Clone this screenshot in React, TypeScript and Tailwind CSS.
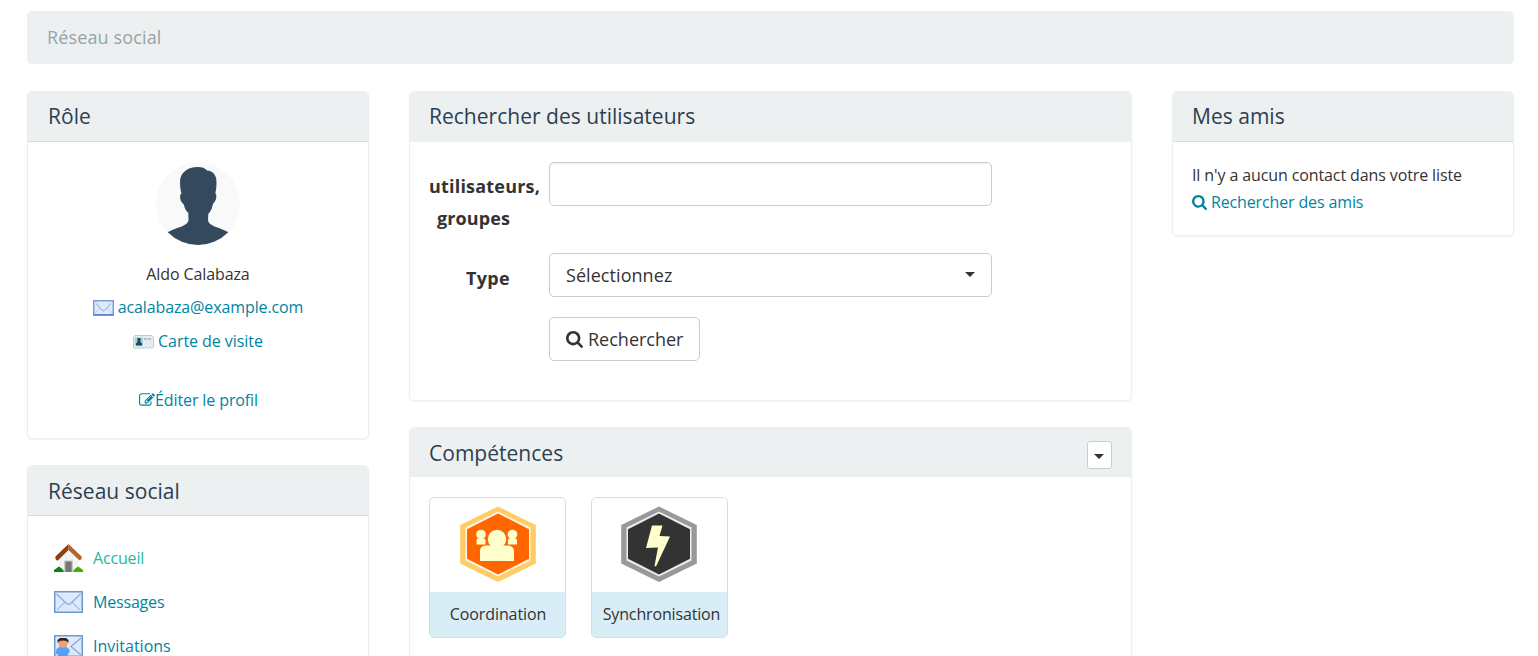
import { useId, type ReactNode } from "react";

const SEARCH_PATH =
  "M1152 832q0-185-131.5-316.5t-316.5-131.5-316.5 131.5-131.5 316.5 131.5 316.5 316.5 131.5 316.5-131.5 131.5-316.5zm512 832q0 52-38 90t-90 38q-54 0-90-38l-343-342q-179 124-399 124-143 0-273.5-55.5t-225-150-150-225-55.5-273.5 55.5-273.5 150-225 225-150 273.5-55.5 273.5 55.5 225 150 150 225 55.5 273.5q0 220-124 399l343 343q37 37 37 90z";
const EDIT_PATH =
  "M888 1184l116-116-152-152-116 116v56h96v96h56zm440-720q-16-16-33 1l-350 350q-17 17-1 33t33-1l350-350q17-17 1-33zm80 594v190q0 119-84.5 203.5t-203.5 84.5h-832q-119 0-203.5-84.5t-84.5-203.5v-832q0-119 84.5-203.5t203.5-84.5h832q63 0 117 25 15 7 18 23 3 17-9 29l-49 49q-14 14-32 8-23-6-45-6h-832q-66 0-113 47t-47 113v832q0 66 47 113t113 47h832q66 0 113-47t47-113v-126q0-13 9-22l64-64q15-15 35-7t20 29zm-96-738l288 288-672 672h-288v-288zm444 132l-92 92-288-288 92-92q28-28 68-28t68 28l152 152q28 28 28 68t-28 68z";

function SearchIcon({ className }: { className: string }) {
  return (
    <svg viewBox="0 128 1664 1664" className={className} fill="currentColor">
      <path d={SEARCH_PATH} />
    </svg>
  );
}

function EditIcon() {
  return (
    <svg viewBox="0 128 1792 1536" className="h-[14px] w-[16px]" fill="currentColor">
      <path d={EDIT_PATH} />
    </svg>
  );
}

function Avatar() {
  const id = useId();
  return (
    <svg viewBox="0 0 84 84" className="size-[84px]">
      <clipPath id={id}>
        <circle cx="42" cy="41" r="42" />
      </clipPath>
      <circle cx="42" cy="42" r="42" fill="#f9f9f9" />
      <path
        clipPath={`url(#${id})`}
        fill="#34495e"
        d="M42 5C46 5 49 6 51 8.500C57 9 60.500 13 60.500 20C60.500 25 60 28 59.300 31.500C61 32 60.500 38 58.500 40C57.500 41 57 42 56.500 43.500C56 47 54.500 49.500 52.300 52L52 58C52.500 64 62 65 72 70L84 84H0L12 70C22 65 32 64 32.500 58L32.300 51C30 49 28.500 46 28 43C27.500 42 26.500 41 25.500 40C23.500 37 23.800 32 25.500 31.500C24.500 28 24 25 24 20C24 11 31 5 42 5Z"
      />
    </svg>
  );
}

function SmallEnvelope() {
  return (
    <svg viewBox="0 0 21 16" className="mt-[2px] h-[16px] w-[21px]">
      <rect x=".75" y=".75" width="19.500" height="14" fill="#dfeafa" stroke="#7b9ddb" strokeWidth="1.500" />
      <path d="M0 15H21" stroke="#5583c9" strokeWidth="1.500" />
      <path d="M2 13L7 8.500M19 13L14 8.500" stroke="#bdd0f0" />
      <path d="M3 3.500L9 10Q10.500 11.500 12 10L18 3.500" fill="none" stroke="#a9c1ec" strokeWidth="1.300" />
    </svg>
  );
}

function Envelope() {
  return (
    <svg viewBox="0 0 29 22" className="-mt-px h-[22px] w-[29px]">
      <rect x=".75" y=".75" width="27.500" height="20.500" fill="#dceafb" stroke="#6f97d0" strokeWidth="1.500" />
      <path d="M3 19L11 11M26 19L18 11" stroke="#a3bfe9" strokeWidth="1.300" />
      <path d="M2.500 3L12.500 12.500Q14.500 14 16.500 12.500L26.500 3" fill="none" stroke="#8caee2" strokeWidth="1.300" />
    </svg>
  );
}

function BusinessCard() {
  return (
    <svg viewBox="0 0 21 14" className="mt-[2px] h-[14px] w-[21px]">
      <path d="M2 .5H19L20.500 2V12L19 13.500L17 12L15 13.500L13 12L11 13.500L9 12.500L7 13.500L5 12.500L3 13.500H1.500L.5 12V2Z" fill="#e4eef0" stroke="#a5d4dd" />
      <rect x="2" y="2.500" width="8" height="8.500" fill="#a8ccd5" />
      <path d="M4.500 3H7.500V7L9 8.500V10.500H3V8.500L4.500 7Z" fill="#174d58" />
      <path d="M11 4H18" stroke="#8c8f92" strokeDasharray="2 .5" />
    </svg>
  );
}

function House() {
  return (
    <svg viewBox="0 0 30 28" preserveAspectRatio="none" className="-mt-px h-[28px] w-[29px]">
      <path d="M5 15L15 6L25 15V27H5Z" fill="#f3f3f3" />
      <path d="M0 28V26L3 24L5 22.500L8 24.500L10 26.500V28Z" fill="#0d8410" />
      <path d="M20 28V26.500L22 24.500L25 22.500L28 24.500L30 26V28Z" fill="#48ab0b" />
      <path d="M10.500 28V16.500H19.500V28Z" fill="#c4c4c4" />
      <path d="M11.800 28V17.500H18.200V28Z" fill="#777" />
      <path d="M3 16.500L1.500 15V12.500L15 0V6L4 16.500Z" fill="#8f3f12" />
      <path d="M15 0L28.500 12.500V15L26.500 16.500L15 6Z" fill="#b5622d" />
    </svg>
  );
}

function Invitation() {
  return (
    <svg viewBox="0 0 29 22" className="-mt-px h-[22px] w-[29px]">
      <rect x=".75" y=".75" width="27.500" height="20.500" fill="#dceafb" stroke="#6f97d0" strokeWidth="1.500" />
      <path d="M27 3L17 11.500L27 20" fill="none" stroke="#8caee2" strokeWidth="1.500" />
      <path d="M1.500 19L2.500 14L6 11.500H12L15.500 14.500V18.500L14 18V22H4V19Z" fill="#55a0f8" />
      <ellipse cx="9" cy="8" rx="4.700" ry="5" fill="#efa077" />
      <path d="M3.500 8V5L6 3H12L14.500 5V8L12.500 6L9 5.500L5.500 6Z" fill="#33241f" />
    </svg>
  );
}

function Hexagon({ outer, rim, inner, children, className = "" }: { outer: string; rim: string; inner: string; children: ReactNode; className?: string }) {
  return (
    <svg viewBox="0 0 76 76" className={`size-[76px] ${className}`}>
      <path d="M38 .5L75.800 19V57.500L38 76L.2 57.500V19Z" fill={outer} />
      <path d="M38 5.500L70.500 21.500V54.500L38 70.500L5.500 54.500V21.500Z" fill={rim} />
      <path d="M38 7.500L69 23.200V52.800L38 68.500L7 52.800V23.200Z" fill={inner} />
      {children}
    </svg>
  );
}

type PanelProps = {
  title: string;
  ruled?: boolean;
  action?: ReactNode;
  children: ReactNode;
  className?: string;
  headClass?: string;
};

function Panel({ title, ruled, action, children, className = "", headClass = "h-[50px] px-[19px]" }: PanelProps) {
  return (
    <section className={`overflow-hidden rounded-[5px] border border-[#ecf0f1] bg-white shadow-[0_1px_2px_rgba(0,0,0,0.06)] ${className}`}>
      <div className={`flex items-center justify-between border-b bg-[#ecf0f1] ${headClass} ${ruled ? "border-[#d5dbdb]" : "border-[#ecf0f1]"}`}>
        <h2 className="text-[21px] leading-[30px] tracking-[0.02px] text-[#2c3e50]">{title}</h2>
        {action}
      </div>
      {children}
    </section>
  );
}

function Caret({ className = "" }: { className?: string }) {
  return (
    <svg viewBox="0 0 10 5" className={`h-[5px] w-[10px] ${className}`}>
      <path d="M0 0H10L5 5Z" fill="#333" />
    </svg>
  );
}

function Skill({ name, labelClass, children }: { name: string; labelClass: string; children: ReactNode }) {
  return (
    <div className="flex h-[141px] w-[137px] flex-col overflow-hidden rounded-[5px] border border-[#bce8f1]">
      <div className="flex h-[94px] justify-center pt-[8px]">{children}</div>
      <div className={`flex grow justify-center bg-[#d9edf7] pt-[10px] leading-[24px] whitespace-nowrap ${labelClass}`}>{name}</div>
    </div>
  );
}

export default function App() {
  return (
    <div className="h-[656px] overflow-hidden bg-white pt-[11px] pr-[24px] pl-[27px] font-['Open_Sans',sans-serif] text-[16px] tracking-[-0.11px] text-[#333]">
      <nav className="flex h-[53px] items-center rounded-[5px] bg-[#ecf0f1] px-[20px] text-[18px] tracking-[0.14px] text-[#95a5a6]">Réseau social</nav>
      <main className="mt-[27px] flex items-start gap-[40px]">
        <aside className="flex w-[342px] flex-col gap-[26px]">
          <Panel title="Rôle" ruled className="h-[348px]" headClass="h-[50px] px-[20px] pb-[2px]">
            <div className="flex flex-col items-center pt-[20px]">
              <Avatar />
              <div className="mt-[16px] leading-[24px]">Aldo Calabaza</div>
              <a className="mt-[9px] flex items-center gap-[4px] leading-[24px] text-[#0084a1]">
                <SmallEnvelope />
                <span>acalabaza@example.com</span>
              </a>
              <a className="mt-[10px] flex items-center gap-[4px] leading-[24px] tracking-[-0.05px] text-[#0084a1]">
                <BusinessCard />
                Carte de visite
              </a>
              <a className="mt-[35px] flex items-center pl-px leading-[24px] text-[#0084a1]">
                <EditIcon />
                Éditer le profil
              </a>
            </div>
          </Panel>
          <Panel title="Réseau social" ruled headClass="h-[50px] px-[20px]">
            <ul className="flex flex-col px-[26px] pt-[20px]">
              <li className="flex h-[44px] items-center gap-[10px] tracking-[-0.16px] text-[#1abc9c]">
                <House />
                Accueil
              </li>
              <li className="flex h-[44px] items-center gap-[10px] tracking-[-0.18px] text-[#0084a1]">
                <Envelope />
                Messages
              </li>
              <li className="flex h-[44px] items-center gap-[10px] tracking-[0px] text-[#0084a1]">
                <Invitation />
                Invitations
              </li>
            </ul>
          </Panel>
        </aside>
        <div className="flex w-[723px] flex-col gap-[26px]">
          <Panel title="Rechercher des utilisateurs" className="h-[310px]" headClass="h-[50px] px-[19px] pb-[2px]">
            <form className="flex flex-col pt-[20px] text-[18px]">
              <div className="flex h-[91px]">
                <label className="w-[100px] shrink-0 pt-[8px] pl-[19px] text-right leading-[32px] font-bold tracking-[0.2px]">
                  <span className="flex w-[81px] flex-col">
                    <span className="text-left whitespace-nowrap">utilisateurs,</span>
                    <span className="tracking-[0.1px]">groupes</span>
                  </span>
                </label>
                <input className="ml-[39px] h-[44px] w-[443px] rounded-[5px] border border-[#ccc] shadow-[inset_0_1px_1px_rgba(0,0,0,0.075)]" />
              </div>
              <div className="flex h-[64px]">
                <label className="w-[100px] shrink-0 pt-[9px] text-right leading-[32px] font-bold tracking-[0.3px]">Type</label>
                <button type="button" className="ml-[39px] flex h-[44px] w-[443px] items-center justify-between rounded-[5px] border border-[#ccc] px-[16px] tracking-[0.06px]">
                  Sélectionnez
                  <Caret className="-mt-[2px]" />
                </button>
              </div>
              <button type="button" className="ml-[139px] flex h-[44px] w-[151px] items-center gap-[5px] rounded-[5px] border border-[#ccc] pl-[16px] tracking-[0px]">
                <SearchIcon className="size-[17px]" />
                Rechercher
              </button>
            </form>
          </Panel>
          <Panel
            title="Compétences"
            className="h-[260px]"
            headClass="h-[49px] px-[19px] pt-px"
            action={
              <button type="button" className="mt-[4px] flex h-[28px] w-[25px] items-center justify-center rounded-[3px] border border-[#ccc] bg-white">
                <Caret className="mt-[3px] mr-px" />
              </button>
            }
          >
            <div className="flex gap-[25px] px-[19px] pt-[20px]">
              <Skill name="Coordination" labelClass="pl-px">
                <Hexagon outer="#ffcc66" rim="#fff5e0" inner="#ff6600">
                  <g fill="#ffffcc">
                    <circle cx="21" cy="28.500" r="4.800" />
                    <path d="M16.500 38.500V34Q16.500 32.500 18.500 32.500H23Q25.500 32.500 25.500 34V38.500Z" />
                    <circle cx="52.500" cy="28.500" r="4.800" />
                    <path d="M48 38.500V34Q48 32.500 50 32.500H55Q57 32.500 57 34V38.500Z" />
                    <circle cx="37" cy="33" r="9.200" />
                    <path d="M20 55V45Q20 39.500 26.500 39.500H47.500Q54 40 54 45.500V55Z" />
                  </g>
                </Hexagon>
              </Skill>
              <Skill name="Synchronisation" labelClass="pl-[4px] tracking-[-0.15px]">
                <Hexagon outer="#999999" rim="#eeeeee" inner="#333333" className="mr-[2px]">
                  <path d="M31 19.500H41.500L38.500 30L49 30.500L35 60.500L33.500 60L37 41.500L25 42Z" fill="#ffffcc" />
                </Hexagon>
              </Skill>
            </div>
          </Panel>
        </div>
        <Panel title="Mes amis" ruled className="h-[145px] w-[342px]" headClass="h-[50px] px-[19px] pb-[2px]">
          <div className="px-[19px] pt-[20px] leading-[27px]">
            <p>Il n'y a aucun contact dans votre liste</p>
            <a className="flex items-center gap-[4px] tracking-[-0.14px] text-[#0084a1]">
              <SearchIcon className="size-[15px]" />
              Rechercher des amis
            </a>
          </div>
        </Panel>
      </main>
    </div>
  );
}
